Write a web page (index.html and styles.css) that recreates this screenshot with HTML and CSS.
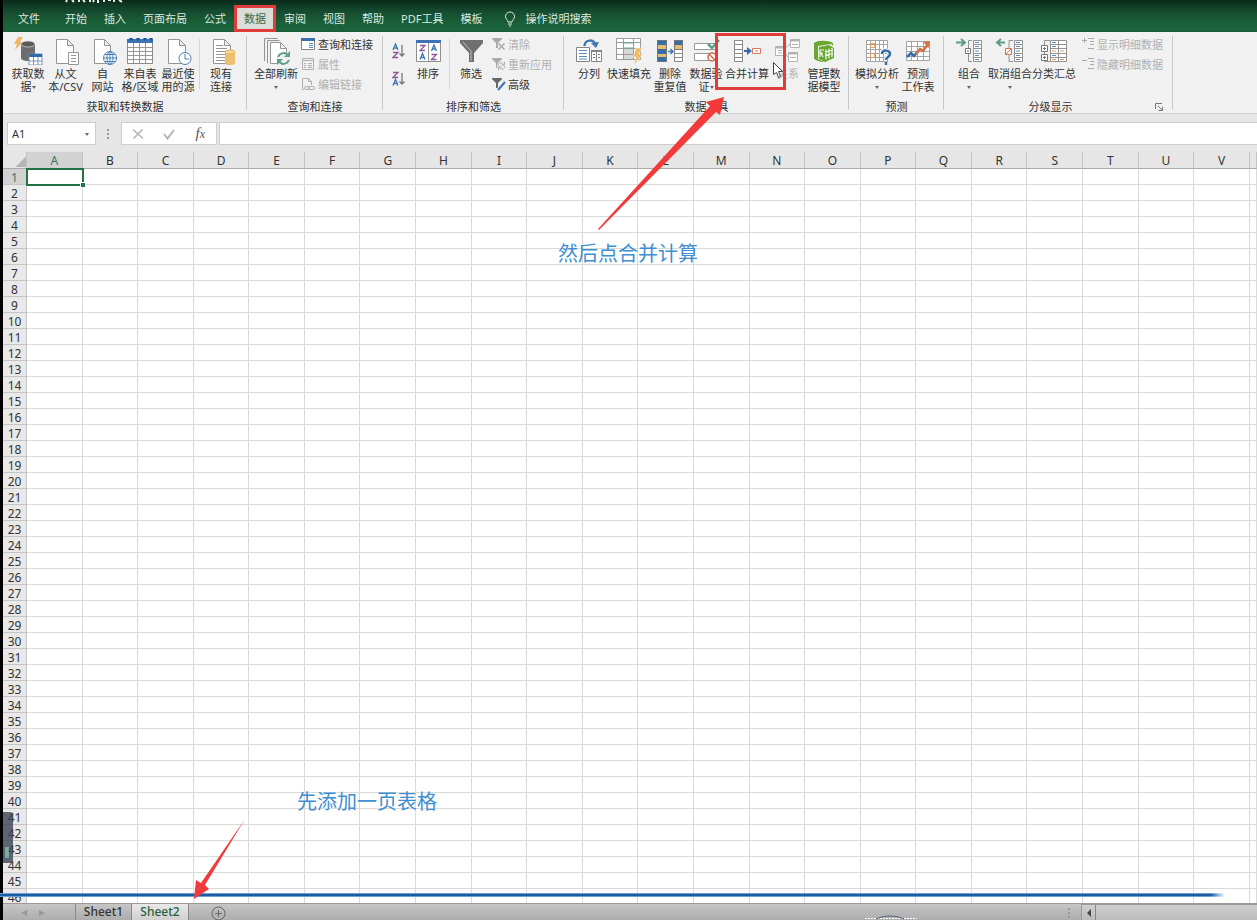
FILE: index.html
```html
<!DOCTYPE html>
<html lang="zh-CN">
<head>
<meta charset="utf-8">
<title>Excel</title>
<link rel="stylesheet" href="styles.css">
</head>
<body>
<div class="app">
  <header class="tabbar">
    <svg class="title-marks" width="58" height="3" viewBox="0 0 58 3" aria-hidden="true"><path d="M2 0l-1 2M7 0l2 2M14 0v2M18 0l2 2M25 0v2M29 0l-1 2M33 0v3M39 0v2M43 0h3M49 0v2M54 0l3 2" stroke="#e8eeea" stroke-width="2" fill="none"/></svg>
    <nav class="tabs">
      <button class="tab file">文件</button>
      <button class="tab">开始</button>
      <button class="tab">插入</button>
      <button class="tab">页面布局</button>
      <button class="tab">公式</button>
      <button class="tab active">数据</button>
      <button class="tab">审阅</button>
      <button class="tab">视图</button>
      <button class="tab">帮助</button>
      <button class="tab">PDF工具</button>
      <button class="tab">模板</button>
      <button class="tab tell"><svg width="12" height="16" viewBox="0 0 12 16" fill="none" stroke="#e3ece6"><path d="M4 11C4 9 1.500 8 1.500 5.500a4.500 4.500 0 0 1 9 0C10.500 8 8 9 8 11zM4 13h4M5 15h2"/></svg>操作说明搜索</button>
    </nav>
  </header>

  <section class="ribbon">
    <div class="group g-get">
      <div class="items">
        <button class="big"><svg width="30" height="28" viewBox="0 0 30 28"><path d="M8 7v14c0 4 14 4 14 0V7z" fill="#6d6d6d"/><ellipse cx="15" cy="7" rx="7" ry="3" fill="#5b5b5b" stroke="#ddd" stroke-width=".7"/><path d="M5 0h5L7 5h3L2 13l2-6H1z" fill="#efb867"/><path d="M16 17h13v11H16z" fill="#fff" stroke="#7894b8"/><path d="M16 17h13v3H16z" fill="#2f6cae"/><path d="M16 24h13M20.500 20v8M25 20v8" stroke="#7894b8"/></svg><span>获取数<br>据<i class="caret"></i></span></button>
        <button class="big"><svg width="30" height="28" viewBox="0 0 30 28" fill="#fff" stroke="#959595"><path d="M5.500 2.500h11l6 6v18h-17zM16.500 2.500v6h6"/><path d="M17.500 15.500h10v12h-10z"/><path d="M20 18.500h5M20 21.500h5M20 24.500h5"/></svg><span>从文<br>本/CSV</span></button>
        <button class="big"><svg width="30" height="28" viewBox="0 0 30 28" fill="#fff" stroke="#959595"><path d="M6.500 2.500h10l6 6v18h-16zM16.500 2.500v6h6"/><g stroke="#4a7fb8"><circle cx="22" cy="21" r="6.500"/><ellipse cx="22" cy="21" rx="3" ry="6.500"/><path d="M15.500 21h13M17 17.500h10M17 24.500h10M22 14.500v13"/></g></svg><span>自<br>网站</span></button>
        <button class="big"><svg width="30" height="28" viewBox="0 0 30 28"><path d="M2.500 2.500h25v24h-25z" fill="#fff" stroke="#8b8b8b"/><path d="M2 2h26v4H2z" fill="#3b73b4"/><path d="M4 1h4l-2 3zM11 1h4l-2 3zM18 1h4l-2 3zM24 1h4l-2 3z" fill="#1f558f"/><path d="M3 10.500h24M3 14.500h24M3 18.500h24M3 22.500h24M8.500 6v20M14.500 6v20M20.500 6v20" stroke="#969696" fill="none"/></svg><span>来自表<br>格/区域</span></button>
        <button class="big"><svg width="30" height="28" viewBox="0 0 30 28" fill="#fff" stroke="#959595"><path d="M5.500 2.500h11l6 6v18h-17zM16.500 2.500v6h6"/><circle cx="22" cy="21.500" r="6" stroke="#4a7fb8"/><path d="M22 17v5h4" fill="none" stroke="#4a7fb8"/></svg><span>最近使<br>用的源</span></button>
        <span class="rule"></span>
        <button class="big"><svg width="30" height="28" viewBox="0 0 30 28" fill="#fff" stroke="#959595"><path d="M7.500 2.500h11l6 6v18h-17zM18.500 2.500v6h6"/><path d="M10 8.500h7M10 11.500h11M10 14.500h9M10 17.500h9M10 20.500h9M10 23.500h9"/><path d="M19 15v11c0 3 10 3 10 0V15z" fill="#ecc06f" stroke="none"/><ellipse cx="24" cy="15" rx="5" ry="2" fill="#f7d999" stroke="#e3b055"/></svg><span>现有<br>连接</span></button>
      </div>
      <div class="caption">获取和转换数据</div>
    </div>

    <div class="group g-query">
      <div class="items">
        <button class="big"><svg width="30" height="28" viewBox="0 0 30 28" fill="#fff" stroke="#959595"><path d="M3.500 24V1.500h13M6.500 26V3.500h12" fill="none"/><path d="M9.500 5.500h10l6 6v15h-16zM19.500 5.500v6h6"/><circle cx="22.500" cy="22" r="7" fill="#f1f1f1" stroke="none"/><path d="M17 20c2-5 8-5 10-1M28 23c-2 5-8 5-10 1" fill="none" stroke="#5fa187" stroke-width="2"/><path d="M29 14v6h-6zM16 28v-6h6z" fill="#5fa187" stroke="none"/></svg><span>全部刷新<br><i class="caret"></i></span></button>
        <div class="list">
          <button class="small"><svg width="14" height="14" viewBox="0 0 14 14"><path d="M.5 1.500h13v11H.5z" fill="#fff" stroke="#848484"/><path d="M0 1h14v3H0z" fill="#3870ad"/><path d="M8 6.500h4M8 8.500h4M8 10.500h4" stroke="#5b8cc0"/></svg>查询和连接</button>
          <button class="small" disabled><svg width="14" height="14" viewBox="0 0 14 14" fill="none" stroke="#b0b0b0"><path d="M1.500 1.500h11v11h-11zM1 3.500h12M3 6.500h2M7 6.500h4M3 8.500h2M7 8.500h4M3 10.500h2M7 10.500h4"/></svg>属性</button>
          <button class="small" disabled><svg width="14" height="14" viewBox="0 0 14 14" fill="none" stroke="#b0b0b0"><path d="M3 12.500H1.500V1.500h6l3 3V8M7.500 1.500v3h3"/><rect x="3.500" y="9.500" width="5" height="3" rx="1.500"/><rect x="7.500" y="9.500" width="6" height="3" rx="1.500"/></svg>编辑链接</button>
        </div>
      </div>
      <div class="caption">查询和连接</div>
    </div>

    <div class="group g-sort">
      <div class="items">
        <div class="pair">
          <button class="mini" aria-label="升序"><svg width="14" height="16" viewBox="0 0 14 16" fill="none" stroke-width="1.300"><path d="M1 7l2.500-6L6 7M2 5h3" stroke="#3f76b5"/><path d="M1 9.500h5L1 14.500h5" stroke="#8b5a9b"/><path d="M10 2v11M7.500 10.500L10 13l2.500-2.500" stroke="#777"/></svg></button>
          <button class="mini" aria-label="降序"><svg width="14" height="16" viewBox="0 0 14 16" fill="none" stroke-width="1.300"><path d="M1 1.500h5L1 6.500h5" stroke="#8b5a9b"/><path d="M1 14.500l2.500-6 2.500 6M2 12.500h3" stroke="#3f76b5"/><path d="M10 2v11M7.500 10.500L10 13l2.500-2.500" stroke="#777"/></svg></button>
        </div>
        <button class="big"><svg width="30" height="28" viewBox="0 0 30 28" fill="none"><path d="M3.500 3.500h24v21h-24z" fill="#fff" stroke="#8f8f8f"/><path d="M3 3h25v3H3z" fill="#3b73b4"/><path d="M15.500 6v18" stroke="#999"/><path d="M7 8.500h5L7 13.500h5M18.500 17.500h5l-5 5h5" stroke="#8b5a9b" stroke-width="1.300"/><path d="M7 22.500l2.500-6 2.500 6M8 20.500h3M18.500 14l2.500-6 2.500 6M19.500 12h3" stroke="#3f76b5" stroke-width="1.300"/></svg><span>排序</span></button>
        <span class="rule"></span>
        <button class="big"><svg width="30" height="28" viewBox="0 0 30 28"><path d="M4 3h23v3l-9 10v9h-5v-9L4 6z" fill="#707070"/><path d="M7 5l8 9v10" stroke="#bcbcbc" fill="none"/></svg><span>筛选</span></button>
        <div class="list">
          <button class="small" disabled><svg width="14" height="14" viewBox="0 0 14 14"><path d="M0 1h10v1L6 6v5H4V6L0 2z" fill="#aaa"/><path d="M6.500 6.500l6 6M12.500 6.500l-6 6" stroke="#f1f1f1" stroke-width="3"/><path d="M6.500 6.500l6 6M12.500 6.500l-6 6" stroke="#aaa" stroke-width="1.500"/></svg>清除</button>
          <button class="small" disabled><svg width="14" height="14" viewBox="0 0 14 14" fill="none"><path d="M0 1h10v1L6 6v5H4V6L0 2z" fill="#aaa"/><circle cx="9.500" cy="9" r="4.500" fill="#f1f1f1"/><path d="M6 9c0-4 5-4 6-1M13 9c0 4-5 4-6 1M12.500 5v3h-3M6.500 13v-3h3" stroke="#aaa"/></svg>重新应用</button>
          <button class="small"><svg width="14" height="14" viewBox="0 0 14 14"><path d="M0 1h10v1L6 6v5H4V6L0 2z" fill="#666"/><path d="M13 5l-7 8" stroke="#f1f1f1" stroke-width="4"/><path d="M13 5l-7 8" stroke="#3f76b5" stroke-width="2"/></svg>高级</button>
        </div>
      </div>
      <div class="caption">排序和筛选</div>
    </div>

    <div class="group g-tools">
      <div class="items">
        <button class="big"><svg width="30" height="28" viewBox="0 0 30 28" fill="none" stroke="#858585"><path d="M10.500 9c0-7 10-7 11-1" stroke="#3f76b5" stroke-width="2.500"/><path d="M17 6l5 5 3-6z" fill="#3f76b5" stroke="none"/><path d="M2.500 10.500h13v14h-13zM17.500 13.500h10v11h-10zM22.500 13v11" fill="#fff"/><path d="M17 14h11" stroke-width="2"/><path d="M5 13.500h8M5 16.500h8M5 19.500h8M5 22h8" stroke="#5b8cc0"/><path d="M19 17.500h2M19 20.500h2M24 17.500h2M24 20.500h2" stroke="#777"/></svg><span>分列</span></button>
        <button class="big"><svg width="30" height="28" viewBox="0 0 30 28" fill="none" stroke="#9b9b9b"><path d="M2.500 1.500h24v21h-24z" fill="#fff"/><path d="M10 12h10v10H10z" fill="#d7d7d7" stroke="none"/><path d="M2 5.500h25M2 11.500h25M2 17.500h25M9.500 2v20M19.500 2v20"/><path d="M9.500 6h10v5h-10z" stroke="#72a98f"/><path d="M22 11h6l-3 6h4l-9 11 2-8h-3z" fill="#edba66" stroke="#f1f1f1" stroke-width=".6"/></svg><span>快速填充</span></button>
        <button class="big"><svg width="30" height="28" viewBox="0 0 30 28" fill="none"><path d="M2 3h10v22H2zM19 3h9v6h-9z" fill="#356da8"/><path d="M2 8h10v4H2zM2 17h10v3H2zM19 8h9v4h-9z" fill="#e8bc70"/><path d="M19.500 12.500h8v12h-8zM19 16.500h9M19 20.500h9" fill="#fff" stroke="#8a8a8a"/><path d="M2.500 3.500h9v21h-9zM19.500 3.500h8v9h-8z" stroke="#777"/><path d="M13 14.500h5M15.500 12l2.500 2.500-2.500 2.500" stroke="#3f76b5" stroke-width="1.500"/></svg><span>删除<br>重复值</span></button>
        <button class="big"><svg width="30" height="28" viewBox="0 0 30 28" fill="none" stroke="#999"><path d="M3.500 6.500h21v6h-21zM3.500 16.500h21v7h-21z" fill="#fff"/><path d="M17 7l4 4 7-8" stroke="#5ba084" stroke-width="2.500"/><circle cx="21" cy="20" r="4" fill="#fff" stroke="#d4694a" stroke-width="1.500"/><path d="M18 17l6 6" stroke="#d4694a" stroke-width="1.500"/></svg><span>数据验<br>证<i class="caret"></i></span></button>
        <button class="big"><svg width="30" height="28" viewBox="0 0 30 28" fill="none"><path d="M2.500 3.500h8v21h-8zM2 7.500h9M2 12.500h9M2 16.500h9M2 20.500h9" fill="#fff" stroke="#8b8b8b"/><path d="M12 14h6" stroke="#356da8" stroke-width="2"/><path d="M15 10l5 4-5 4z" fill="#356da8"/><path d="M20.500 11.500h8v5h-8zM23 14h3" fill="#fff" stroke="#dc775d"/></svg><span>合并计算</span></button>
        <button class="big" disabled><svg width="30" height="28" viewBox="0 0 30 28" fill="none" stroke="#b3b3b3"><path d="M2.500 9.500h8v9h-8zM17.500 2.500h9v8h-9zM15.500 15.500h9v9h-9z" fill="#fff"/><path d="M3 10.500h8M18 3.500h9M16 16.500h9" stroke-width="2"/><path d="M5 13.500h4M5 16h4M19 7.500h6M17 20.500h6M11 12l6-5M11 14l4 6"/></svg><span>关系</span></button>
        <button class="big"><svg width="30" height="28" viewBox="0 0 30 28" fill="none"><path d="M5 6c3-3 15-3 19 0v3l-2-2-13 2v13l6 3c-4 0-10-2-10-4z" fill="#69a82f"/><path d="M10 10l10-2 5 3v10l-9 4-6-3z" fill="#69a82f"/><path d="M17 12.500v10M20 11.500v10M23 11v9M16 15l8-2M16 18.500l8-2M11 13h4M11 13v7M14 16h-2l2 4" stroke="#f4faee" stroke-width="1.200"/></svg><span>管理数<br>据模型</span></button>
      </div>
      <div class="caption">数据工具</div>
    </div>

    <div class="group g-forecast">
      <div class="items">
        <button class="big"><svg width="30" height="28" viewBox="0 0 30 28" fill="none"><path d="M4.500 3.500h21v21h-21zM4 7.500h22M4 12.500h22M4 16.500h22M4 20.500h22M8.500 3v22M13.500 3v22M17.500 3v22M21.500 3v22" fill="#fff" stroke="#a3a3a3"/><path d="M8.500 6.500h4v4h-4zM8.500 16.500h4v4h-4z" stroke="#e59d68"/><path d="M20 17c0-5 8-4 8 0 0 3-4 3-4 6" stroke="#f1f1f1" stroke-width="5"/><path d="M20 17c0-5 8-4 8 0 0 3-4 3-4 6M24 25v3" stroke="#356da8" stroke-width="2.500"/></svg><span>模拟分析<br><i class="caret"></i></span></button>
        <button class="big"><svg width="30" height="28" viewBox="0 0 30 28" fill="none"><path d="M3.500 4.500h23v19h-23zM3 9.500h24M3 14.500h24M3 19.500h24M8.500 4v20M14.500 4v20M20.500 4v20" fill="#fff" stroke="#a3a3a3"/><path d="M4 20l4-4 3 3 4-5" stroke="#356da8" stroke-width="2.500"/><path d="M13 17l4-5 3 2 5-7" stroke="#d77345" stroke-width="2.500"/><path d="M20 5l7-1-1 7z" fill="#d77345"/></svg><span>预测<br>工作表</span></button>
      </div>
      <div class="caption">预测</div>
    </div>

    <div class="group g-outline">
      <div class="items">
        <button class="big"><svg width="30" height="28" viewBox="0 0 30 28" fill="none" stroke="#929292"><path d="M2 5.500h8M7 2l4 3.500L7 9" stroke="#5ba084" stroke-width="2"/><path d="M18 3.500h-3.500v21H18"/><path d="M19.500 3.500h8v21h-8zM19 7.500h9M19 11.500h9M19 16.500h9M19 20.500h9" fill="#fff"/><path d="M11.500 11.500h5v5h-5zM13 14h2" fill="#fff" stroke="#777"/><path d="M21 5.500h4M21 9.500h4M21 14h4M21 18.500h4M21 22.500h4" stroke="#5b8cc0"/></svg><span>组合<br><i class="caret"></i></span></button>
        <button class="big"><svg width="30" height="28" viewBox="0 0 30 28" fill="none" stroke="#929292"><path d="M10 5.500H3M6 2L2 5.500 6 9" stroke="#5ba084" stroke-width="2"/><path d="M18 3.500h-4v21h4"/><path d="M19.500 3.500h8v21h-8zM19 7.500h9M19 11.500h9M19 16.500h9M19 20.500h9" fill="#fff"/><path d="M10.500 11.500h6v6h-6zM11 17l5-5" fill="#fff" stroke="#d77357"/><path d="M21 5.500h4M21 9.500h4M21 14h4M21 18.500h4M21 22.500h4" stroke="#5b8cc0"/></svg><span>取消组合<br><i class="caret"></i></span></button>
        <button class="big"><svg width="30" height="28" viewBox="0 0 30 28" fill="none" stroke="#929292"><path d="M11 3.500H5.500v21H11"/><path d="M11.500 3.500h16v21h-16zM19.500 3v22M11 7.500h17M11 11.500h17M11 16.500h17M11 20.500h17" fill="#fff"/><path d="M2.500 8.500h6v6h-6zM2.500 17.500h6v6h-6zM4 11.500h3M5.500 10v3M4 20.500h3M5.500 19v3" fill="#fff" stroke="#777"/><path d="M13 5.500h4M13 9.500h4M13 18.500h4" stroke="#5b8cc0"/><path d="M13 14h4M21 14h4M13 22.500h4M21 22.500h4" stroke="#e3996a"/></svg><span>分类汇总</span></button>
        <div class="list">
          <button class="small" disabled><svg width="14" height="14" viewBox="0 0 14 14" fill="none" stroke="#aaa"><path d="M0 3.500h5M2.500 1v5M6 1.500h6M8 4.500h4M8 7.500h4M6 11.500h6"/></svg>显示明细数据</button>
          <button class="small" disabled><svg width="14" height="14" viewBox="0 0 14 14" fill="none" stroke="#aaa"><path d="M0 3.500h5M6 1.500h6M8 4.500h4M8 7.500h4M6 11.500h6"/></svg>隐藏明细数据</button>
        </div>
      </div>
      <div class="caption with-launcher"><span>分级显示</span><button class="launcher" aria-label="分级显示设置"><svg width="8" height="8" viewBox="0 0 8 8" fill="none" stroke="#777"><path d="M.5 6V.5H7M3 3l4 4M7.500 3.500v4h-4"/></svg></button></div>
    </div>
  </section>

  <section class="formula">
    <div class="namebox"><input type="text" value="A1" aria-label="名称框"><button aria-label="名称列表"><i class="caret"></i></button></div>
    <span class="grip"></span>
    <div class="fx">
      <button aria-label="取消"><svg width="12" height="12" viewBox="0 0 12 12"><path d="M1 1.500l10 9M10.500 1.500l-9 9" stroke="#b3b3b3" stroke-width="1.500"/></svg></button>
      <button aria-label="输入"><svg width="12" height="12" viewBox="0 0 12 12"><path d="M1 6l3.500 4.500L11 2" fill="none" stroke="#b3b3b3" stroke-width="2"/></svg></button>
      <button class="fn" aria-label="插入函数">f<small>x</small></button>
    </div>
    <input class="entry" type="text" aria-label="编辑栏">
  </section>

  <main class="sheet">
    <table class="grid">
      <colgroup><col class="c-num"><col span="22"><col class="c-rest"></colgroup>
      <thead><tr id="heads"></tr></thead>
      <tbody id="rows"></tbody>
    </table>
  </main>

  <footer class="sheetbar">
    <div class="steps"><button aria-label="上一个">◂</button><button aria-label="下一个">▸</button></div>
    <button class="leaf">Sheet1</button>
    <button class="leaf current">Sheet2</button>
    <button class="add" aria-label="新工作表"><svg width="15" height="15" viewBox="0 0 15 15" fill="none" stroke="#666"><circle cx="7.500" cy="7.500" r="6.500"/><path d="M4 7.500h7M7.500 4v7"/></svg></button>
    <span class="grip"></span>
    <div class="hscroll"><button aria-label="向左滚动"><svg width="6" height="8" viewBox="0 0 6 8"><path d="M5 0v8L1 4z" fill="#444"/></svg></button></div>
  </footer>

  <div class="dock"></div>
  <div class="progress"></div>
  <svg class="notes" width="1257" height="920" viewBox="0 0 1257 920" aria-hidden="true">
    <path d="M716.500 34.500h68v54h-68z" fill="none" stroke="#e03c3c" stroke-width="3"/>
    <path d="M773.500 62.500v12l3-2 2 5 2-1-2-5h4z" fill="#fff" stroke="#444"/>
    <path d="M724 97l-18 5 4 4L598 229l1 1 117-118 4 3z" fill="#f23a3a"/>
    <path d="M194 899l2-19 5 3 44-64-40 66 4 4z" fill="#f23a3a"/>
    <path d="M865 918.500h52" stroke="#fff" stroke-dasharray="2 1"/>
    <path d="M876 919c8-4 20-4 28 0" fill="none" stroke="#53617a"/>
  </svg>
  <p class="note note-merge">然后点合并计算</p>
  <p class="note note-add">先添加一页表格</p>
</div>
<script src="script.js"></script>
</body>
</html>
```
FILE: styles.css
```css
* { box-sizing: border-box; }
body { margin: 0; background: #000; overflow: hidden; font: 11px/13px "Noto Sans", "Noto Sans CJK SC", sans-serif; color: #333; }
button, input { font: inherit; color: inherit; border: 0; padding: 0; margin: 0; background: none; }
svg { display: block; flex: none; }
.app { position: relative; display: flex; flex-direction: column; height: 100vh; padding-left: 3px; overflow: hidden; }

.tabbar { position: relative; flex: none; height: 32px; padding-top: 6px; background: linear-gradient(#0a2a1c, #154a2f 35%, #1a6038 75%, #1b653c); border-bottom: 1px solid #1a5c3a; }
.title-marks { position: absolute; left: 62px; top: 0; }
.tabs { display: flex; gap: 1px; padding-left: 7px; }
.tab { height: 25px; padding: 0 8px; color: #dbe8e0; white-space: nowrap; }
.tab.file { margin-right: 8px; }
.tab.active { padding: 0 9px; background: #d9dedb; color: #33684c; outline: 3px solid #e03c3c; outline-offset: -2px; }
.tab.tell { display: flex; align-items: center; gap: 9px; margin-left: 5px; }

.ribbon { display: flex; flex: none; height: 82px; padding-top: 4px; background: #f1f1f1; border-bottom: 1px solid #d2d2d2; }
.group { display: flex; flex-direction: column; flex: none; height: 74px; padding: 0 5px 0 6px; border-right: 1px solid #c8c8c8; }
.items { display: flex; flex: none; height: 62px; }
.caption { flex: none; line-height: 14px; text-align: center; }
.with-launcher { display: flex; }
.with-launcher span { flex: 1; }
.launcher { width: 16px; display: grid; place-items: center; }
.big { display: flex; flex-direction: column; align-items: center; gap: 2px; padding-top: 1px; white-space: nowrap; text-align: center; flex: none; width: 38px; }
.big svg { margin: 0 -4px; }
.big:disabled, .small:disabled { color: #b0b0b0; }
.caret { display: inline-block; border: 2px solid transparent; border-top: 3px solid #666; border-bottom: 0; margin-left: 3px; vertical-align: 2px; }
br + .caret { margin-left: 0; }
.rule { flex: none; width: 1px; height: 50px; margin: 3px 2px 0; background: #d4d4d4; }
.list { display: flex; flex-direction: column; margin-top: -2px; }
.small { display: flex; align-items: center; gap: 3px; height: 20px; white-space: nowrap; }
.pair { display: flex; flex: none; flex-direction: column; gap: 12px; width: 20px; align-items: center; padding-top: 7px; }
.caption { padding-top: 2px; line-height: 13px; }
.g-get { width: 244px; }
.g-get .big:nth-child(2), .g-get .big:nth-child(3) { width: 37px; }
.g-query { width: 136px; }
.g-query .big { width: 46px; }
.g-query .list { margin-left: 2px; }
.g-sort { width: 181px; }
.g-sort .list { margin-left: 2px; }
.g-sort .small { gap: 2px; }
.g-tools { width: 285px; }
.g-tools .big:nth-child(2) { width: 42px; }
.g-tools .big:nth-child(3) { width: 40px; }
.g-tools .big:nth-child(4) { width: 32px; }
.g-tools .big:nth-child(5) { width: 50px; }
.g-tools .big:nth-child(6) { width: 32px; }
.g-tools .big:nth-child(7) { width: 40px; }
.g-forecast { width: 95px; }
.g-forecast .big:first-child { width: 44px; }
.g-outline { width: 229px; }
.g-outline .big:nth-child(n+2) { width: 44px; }
.g-outline .list { margin-left: 6px; }
.g-outline .small { gap: 1px; }

.formula { display: flex; flex: none; height: 38px; padding: 8px 0 7px 4px; background: #e6e6e6; }
.namebox { display: flex; width: 89px; background: #fff; border: 1px solid #cdcdcd; }
.namebox input { flex: 1; min-width: 0; padding-left: 4px; }
.namebox button { width: 16px; }
.namebox .caret { margin: 0; }
.grip { width: 2px; height: 10px; margin: 7px 12px 0 11px; background: repeating-linear-gradient(#999 0 2px, transparent 2px 4px); }
.fx { display: flex; width: 96px; background: #fff; border: 1px solid #cdcdcd; }
.fx button { flex: 1; display: grid; place-items: center; }
.fx .fn { display: block; font: italic 15px/20px "Liberation Serif", serif; color: #555; }
.fn small { font-size: 12px; }
.entry { flex: 1; min-width: 0; margin-left: 2px; background: #fff; border: 1px solid #cdcdcd; border-right: 0; }

.sheet { flex: 1; min-height: 0; overflow: hidden; background: #fff; }
.grid { width: 100%; table-layout: fixed; border-spacing: 0; }
.c-num { width: 24px; }
.c-rest { width: 7px; }
.grid th, .grid td { height: 16px; padding: 0; border: 0 solid #dadada; border-width: 0 1px 1px 0; }
.grid th { padding-top: 2px; font-size: 12px; line-height: 13px; font-weight: 400; background: #e9e9e9; color: #333; border-color: #c4c4c4; }
.grid thead th { height: 17px; line-height: 14px; background: #e6e6e6; border-bottom-color: #aaa; }
.grid th.on, .grid thead th.on { background: #d2d2d2; color: #39735a; }
.grid thead th.on { border-bottom-color: #217346; }
.grid thead .corner { background: linear-gradient(135deg, transparent 60%, #b5b5b5 60%) 8px 4px / 15px 11px no-repeat #e6e6e6; }
.grid td.picked { position: relative; outline: 2px solid #217346; outline-offset: -1px; }
.picked::after { content: ""; position: absolute; right: -3px; bottom: -3px; width: 4px; height: 4px; background: #217346; border: 0 solid #fff; border-width: 1px 0 0 1px; box-sizing: content-box; }

.sheetbar { display: flex; flex: none; height: 17px; background: linear-gradient(#c6c6c6, #adadad); border-top: 1px solid #999; overflow: hidden; font: 12px/16px "Noto Sans", sans-serif; }
.steps { display: flex; width: 72px; gap: 12px; padding-left: 18px; color: #999; font-size: 12px; }
.leaf { width: 57px; border: 0 solid #888; border-width: 0 1px; font-weight: 500; color: #333; line-height: 15px; padding-bottom: 1px; }
.leaf.current { background: linear-gradient(#e9e9e9, #cfcfcf); color: #285e41; border-left: 0; }
.add { margin: 2px 0 0 22px; align-self: flex-start; }
.sheetbar .grip { margin: 4px 11px 0 auto; flex: none; }
.hscroll { display: flex; flex: none; width: 14%; background: linear-gradient(#cfcfcf, #bbb); border: 1px solid #999; border-width: 1px 0 0 1px; }
.hscroll button { width: 14px; border-right: 1px solid #888; display: grid; place-items: center; }

.dock { position: absolute; left: 3px; top: 812px; width: 10px; height: 51px; background: linear-gradient(#5aa08b, #5aa08b) 2px 35px / 4px 11px no-repeat #3b4355; border-radius: 0 3px 3px 0; opacity: .8; }
.progress { position: absolute; left: 0; right: 32px; bottom: 23px; height: 4px; background: linear-gradient(90deg, transparent calc(100% - 14px), #fff), linear-gradient(#8dc0ee, #14559e 40%, #14559e 60%, #8dc0ee); }
.notes { position: absolute; left: 0; top: 0; pointer-events: none; }
.note { position: absolute; margin: 0; font-size: 20px; line-height: 26px; color: #3e8fd0; white-space: nowrap; }
.note-merge { left: 558px; top: 241px; }
.note-add { left: 297px; top: 789px; }
```
FILE: script.js
```js
const letters = "ABCDEFGHIJKLMNOPQRSTUV".split("");
document.getElementById("heads").innerHTML =
  '<th class="corner"></th>' +
  letters.map((c, i) => `<th scope="col"${i ? "" : ' class="on"'}>${c}</th>`).join("") +
  "<th></th>";

let rows = "";
for (let r = 1; r <= 46; r++) {
  rows += `<tr><th scope="row"${r === 1 ? ' class="on"' : ""}>${r}</th>`;
  for (let c = 0; c < 23; c++) {
    rows += r === 1 && c === 0 ? '<td class="picked"></td>' : "<td></td>";
  }
  rows += "</tr>";
}
document.getElementById("rows").innerHTML = rows;
```
